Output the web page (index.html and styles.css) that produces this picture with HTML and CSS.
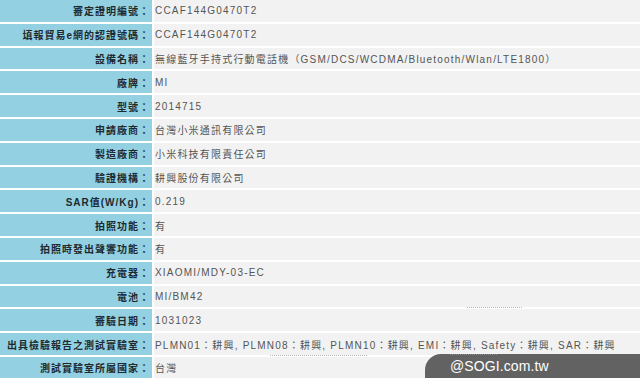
FILE: index.html
```html
<!DOCTYPE html>
<html lang="zh-Hant">
<head>
<meta charset="utf-8">
<title>審定證明</title>
<link rel="stylesheet" href="styles.css">
</head>
<body>
<div class="sheet">
  <div class="lbl">審定證明編號：</div><div class="val">CCAF144G0470T2</div>
  <div class="lbl">填報貿易e網的認證號碼：</div><div class="val">CCAF144G0470T2</div>
  <div class="lbl">設備名稱：</div><div class="val">無線藍牙手持式行動電話機（GSM/DCS/WCDMA/Bluetooth/Wlan/LTE1800）</div>
  <div class="lbl">廠牌：</div><div class="val">MI</div>
  <div class="lbl">型號：</div><div class="val">2014715</div>
  <div class="lbl">申請廠商：</div><div class="val">台灣小米通訊有限公司</div>
  <div class="lbl">製造廠商：</div><div class="val">小米科技有限責任公司</div>
  <div class="lbl">驗證機構：</div><div class="val">耕興股份有限公司</div>
  <div class="lbl">SAR值(W/Kg)：</div><div class="val">0.219</div>
  <div class="lbl">拍照功能：</div><div class="val">有</div>
  <div class="lbl">拍照時發出聲響功能：</div><div class="val">有</div>
  <div class="lbl">充電器：</div><div class="val">XIAOMI/MDY-03-EC</div>
  <div class="lbl">電池：</div><div class="val">MI/BM42</div>
  <div class="lbl">審驗日期：</div><div class="val">1031023</div>
  <div class="lbl">出具檢驗報告之測試實驗室：</div><div class="val">PLMN01：耕興, PLMN08：耕興, PLMN10：耕興, EMI：耕興, Safety：耕興, SAR：耕興</div>
  <div class="lbl">測試實驗室所屬國家：</div><div class="val">台灣</div>
</div>
<div class="dots dots-a"></div>
<div class="dots dots-b"></div>
<div class="watermark">@SOGI.com.tw</div>
<div class="dots dots-c"></div>
</body>
</html>
```
FILE: styles.css
```css
html, body {
  margin: 0;
  padding: 0;
  background: #ffffff;
  width: 640px;
  height: 378px;
  overflow: hidden;
}

body {
  font-family: "Liberation Sans", "Noto Sans CJK TC", sans-serif;
  font-size: 10px;
  position: relative;
}

.sheet {
  display: grid;
  grid-template-columns: 152px 1fr;
  grid-auto-rows: 21.8px;
  column-gap: 2px;
  row-gap: 2px;
}

.lbl {
  background: #93d1e2;
  color: #1e2a30;
  font-weight: bold;
  letter-spacing: 1px;
  padding-right: 2px;
  display: flex;
  align-items: center;
  justify-content: flex-end;
  white-space: nowrap;
}

.val {
  background: #f2f2f2;
  color: #555555;
  letter-spacing: 1.2px;
  padding-left: 1px;
  display: flex;
  align-items: center;
  white-space: nowrap;
  overflow: hidden;
}

.dots {
  position: absolute;
  height: 0;
  border-top: 1px dotted #b5b5b5;
}

.dots-a {
  left: 467px;
  top: 307px;
  width: 55px;
}

.dots-b {
  left: 270px;
  top: 355px;
  width: 97px;
}

.dots-c {
  left: 450px;
  top: 354px;
  width: 47px;
  border-top-color: #8a8a8a;
}

.watermark {
  position: absolute;
  right: 0;
  bottom: 0;
  width: 190px;
  height: 24px;
  padding-left: 25px;
  background: #626262;
  border-top-left-radius: 16px;
  color: #ffffff;
  font-size: 14px;
  line-height: 25px;
  letter-spacing: 0.1px;
}
```
